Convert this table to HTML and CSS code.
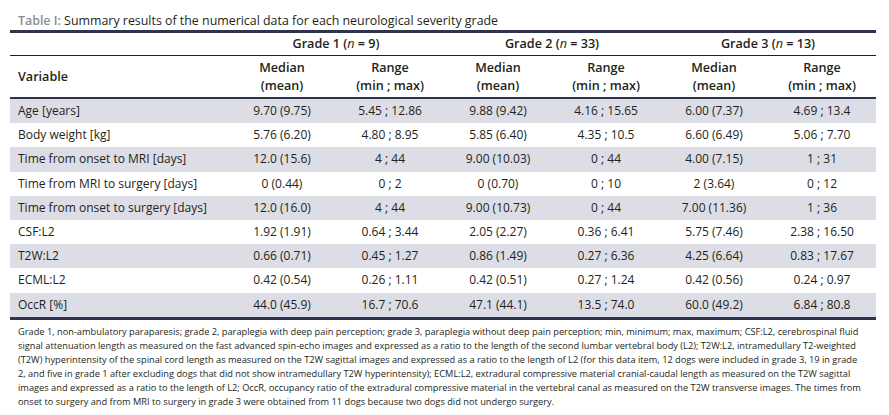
FILE: index.html
```html
<!DOCTYPE html>
<html lang="en">
<head>
<meta charset="utf-8">
<title>Table I</title>
<link rel="stylesheet" href="styles.css">
</head>
<body>
<div class="page">
  <div class="title"><span class="label">Table I:</span> Summary results of the numerical data for each neurological severity grade</div>
  <table class="data">
    <colgroup>
      <col class="c-var">
      <col class="c-num"><col class="c-num"><col class="c-num"><col class="c-num"><col class="c-num"><col class="c-num">
    </colgroup>
    <thead>
      <tr class="group">
        <th></th>
        <th colspan="2">Grade 1 (<i>n</i> = 9)</th>
        <th colspan="2">Grade 2 (<i>n</i> = 33)</th>
        <th colspan="2">Grade 3 (<i>n</i> = 13)</th>
      </tr>
      <tr class="sub">
        <th class="var">Variable</th>
        <th>Median<br>(mean)</th><th>Range<br>(min ; max)</th>
        <th>Median<br>(mean)</th><th>Range<br>(min ; max)</th>
        <th>Median<br>(mean)</th><th>Range<br>(min ; max)</th>
      </tr>
    </thead>
    <tbody>
      <tr class="shade"><td>Age [years]</td><td>9.70 (9.75)</td><td>5.45 ; 12.86</td><td>9.88 (9.42)</td><td>4.16 ; 15.65</td><td>6.00 (7.37)</td><td>4.69 ; 13.4</td></tr>
      <tr><td>Body weight [kg]</td><td>5.76 (6.20)</td><td>4.80 ; 8.95</td><td>5.85 (6.40)</td><td>4.35 ; 10.5</td><td>6.60 (6.49)</td><td>5.06 ; 7.70</td></tr>
      <tr class="shade"><td>Time from onset to MRI [days]</td><td>12.0 (15.6)</td><td>4 ; 44</td><td>9.00 (10.03)</td><td>0 ; 44</td><td>4.00 (7.15)</td><td>1 ; 31</td></tr>
      <tr><td>Time from MRI to surgery [days]</td><td>0 (0.44)</td><td>0 ; 2</td><td>0 (0.70)</td><td>0 ; 10</td><td>2 (3.64)</td><td>0 ; 12</td></tr>
      <tr class="shade"><td>Time from onset to surgery [days]</td><td>12.0 (16.0)</td><td>4 ; 44</td><td>9.00 (10.73)</td><td>0 ; 44</td><td>7.00 (11.36)</td><td>1 ; 36</td></tr>
      <tr><td>CSF:L2</td><td>1.92 (1.91)</td><td>0.64 ; 3.44</td><td>2.05 (2.27)</td><td>0.36 ; 6.41</td><td>5.75 (7.46)</td><td>2.38 ; 16.50</td></tr>
      <tr class="shade"><td>T2W:L2</td><td>0.66 (0.71)</td><td>0.45 ; 1.27</td><td>0.86 (1.49)</td><td>0.27 ; 6.36</td><td>4.25 (6.64)</td><td>0.83 ; 17.67</td></tr>
      <tr><td>ECML:L2</td><td>0.42 (0.54)</td><td>0.26 ; 1.11</td><td>0.42 (0.51)</td><td>0.27 ; 1.24</td><td>0.42 (0.56)</td><td>0.24 ; 0.97</td></tr>
      <tr class="shade"><td>OccR [%]</td><td>44.0 (45.9)</td><td>16.7 ; 70.6</td><td>47.1 (44.1)</td><td>13.5 ; 74.0</td><td>60.0 (49.2)</td><td>6.84 ; 80.8</td></tr>
    </tbody>
  </table>
  <p class="note">Grade 1, non-ambulatory paraparesis; grade 2, paraplegia with deep pain perception; grade 3, paraplegia without deep pain perception; min, minimum; max, maximum; CSF:L2, cerebrospinal fluid<br>signal attenuation length as measured on the fast advanced spin-echo images and expressed as a ratio to the length of the second lumbar vertebral body (L2); T2W:L2, intramedullary T2-weighted<br>(T2W) hyperintensity of the spinal cord length as measured on the T2W sagittal images and expressed as a ratio to the length of L2 (for this data item, 12 dogs were included in grade 3, 19 in grade<br>2, and five in grade 1 after excluding dogs that did not show intramedullary T2W hyperintensity); ECML:L2, extradural compressive material cranial-caudal length as measured on the T2W sagittal<br>images and expressed as a ratio to the length of L2; OccR, occupancy ratio of the extradural compressive material in the vertebral canal as measured on the T2W transverse images. The times from<br>onset to surgery and from MRI to surgery in grade 3 were obtained from 11 dogs because two dogs did not undergo surgery.</p>
</div>
</body>
</html>
```
FILE: styles.css
```css
html, body {
  margin: 0;
  padding: 0;
  background: #ffffff;
}
body {
  font-family: "Open Sans", "Noto Sans", sans-serif;
  color: #231f20;
}
.page {
  width: 866px;
  padding-left: 10px;
}
.title {
  font-size: 12.4px;
  line-height: 16px;
  padding: 13px 0 1px 8px;
  white-space: nowrap;
}
.title .label {
  color: #8b8d90;
  font-weight: 600;
}
.data {
  width: 866px;
  table-layout: fixed;
  border-collapse: collapse;
  font-size: 12px;
  border-top: 3px solid #2c3450;
  border-bottom: 3px solid #2c3450;
}
.c-var { width: 218px; }
.c-num { width: 108px; }
.data th {
  font-size: 12.6px;
  font-weight: 600;
  text-align: center;
  padding: 0;
}
.data .group th {
  height: 22px;
  line-height: 16px;
  border-bottom: 1px solid #231f20;
}
.data .group i {
  font-weight: 400;
}
.data .sub th {
  line-height: 18px;
  padding: 3px 0 2px;
  border-bottom: 2px solid #2c3450;
}
.data .sub th.var {
  text-align: left;
  padding-left: 8px;
}
.data td {
  height: 24.2px;
  padding: 0;
  text-align: center;
  line-height: 16px;
  white-space: nowrap;
}
.data td:first-child {
  text-align: left;
  padding-left: 8px;
}
.data tr.shade td {
  background: #dddde6;
}
.note {
  margin: 0;
  padding: 5px 0 0 8px;
  font-size: 9.26px;
  line-height: 14px;
  white-space: nowrap;
}
```
